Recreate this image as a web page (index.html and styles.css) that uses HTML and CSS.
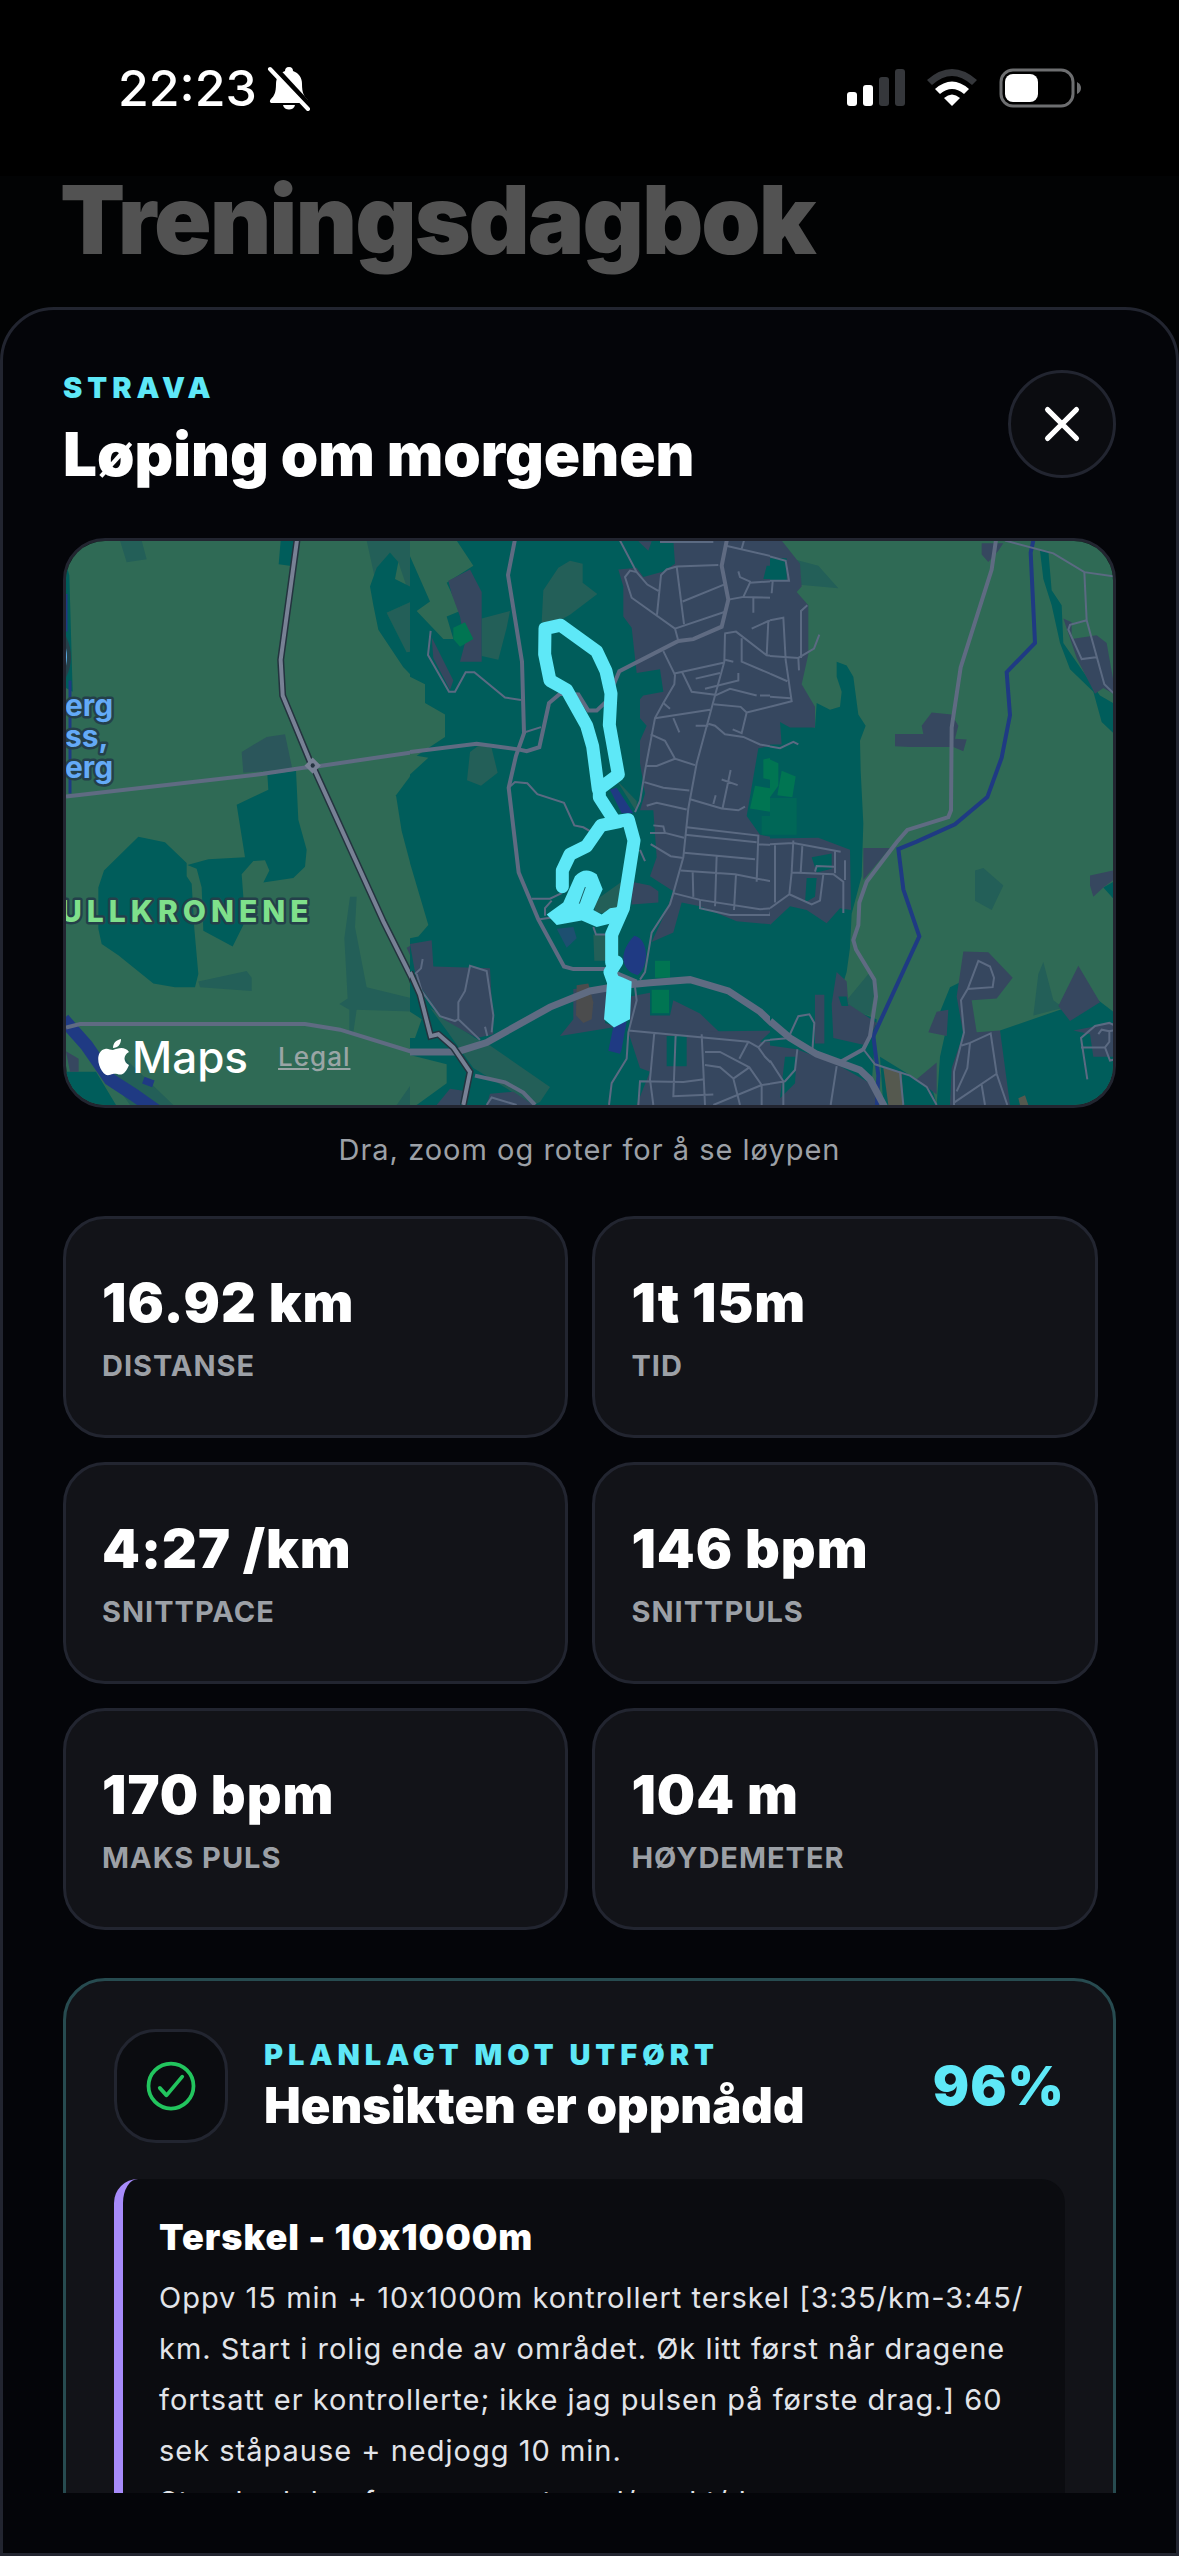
FILE: index.html
```
<!DOCTYPE html>
<html lang="no">
  <head>
    <meta charset="UTF-8" />
    <meta name="viewport" content="width=device-width, initial-scale=1.0" />
    <title>Treningsdagbok</title>
    <link rel="stylesheet" href="styles.css" />
  </head>
  <body>
    <div class="app">
      <!-- Status bar -->
      <header class="status-bar">
        <div class="status-left">
          <span class="status-time">22:23</span>
          <svg class="icon-bell" viewBox="0 0 44 46">
            <path d="M22 2c3 0 4 2 4 4 6 2 9 7 9 13 0 9 2 12 5 15 2 2 1 4-1 4H5c-2 0-3-2-1-4 3-3 5-6 5-15 0-6 3-11 9-13 0-2 1-4 4-4z" fill="#fff" />
            <path d="M16 40h12c-1 6-11 6-12 0z" fill="#fff" />
            <path d="M5 1l38 41" stroke="#000" stroke-width="7" />
            <path d="M3 4l38 40" stroke="#fff" stroke-width="4" stroke-linecap="round" />
          </svg>
        </div>
        <div class="status-right">
          <svg class="icon-signal" viewBox="0 0 58 38">
            <rect x="0" y="23" width="10" height="14" rx="3" fill="#fff" />
            <rect x="16" y="16" width="10" height="21" rx="3" fill="#fff" />
            <rect x="32" y="8" width="10" height="29" rx="3" fill="#35373b" />
            <rect x="48" y="0" width="10" height="37" rx="3" fill="#35373b" />
          </svg>
          <svg class="icon-wifi" viewBox="0 0 50 38">
            <path d="M0 11Q25-11 50 11l-5 5Q25-2 5 16z" fill="#35373b" />
            <path d="M8 20q17-15 34 0l-5 5q-12-10-24 0z" fill="#fff" />
            <path d="M17 29q8-7 16 0l-8 8z" fill="#fff" />
          </svg>
          <svg class="icon-battery" viewBox="0 0 82 40">
            <rect x="2" y="2" width="72" height="36" rx="12" fill="none" stroke="#6d6e70" stroke-width="3" />
            <rect x="6" y="6" width="33" height="28" rx="8" fill="#fff" />
            <path d="M78 14q4 2 4 6t-4 6z" fill="#6d6e70" />
          </svg>
        </div>
      </header>

      <h1 class="page-title">Treningsdagbok</h1>

      <main class="sheet">
        <div class="sheet-scroll">
          <div class="sheet-header">
            <div>
              <p class="eyebrow">STRAVA</p>
              <h2 class="sheet-title">Løping om morgenen</h2>
            </div>
            <button class="close-btn" aria-label="Lukk">
              <svg viewBox="0 0 512 512">
                <path d="M368 368L144 144M368 144L144 368" />
              </svg>
            </button>
          </div>

          <!-- Route map, drawn as three tiles -->
          <div class="map">
            <svg class="map-canvas" viewBox="0 0 1047 564" preserveAspectRatio="xMidYMid slice">
              <!-- west tile -->
              <svg x="-16" y="-11" width="370" height="590" viewBox="0 0 1110 1568" preserveAspectRatio="none">
                <rect class="field" width="1110" height="1568" />
                <path class="scrub" d="M210 28h65l15 50-60 8zM950 28h160v300l-40-3-60-105 75-30-40-105-25-25-40 90zM445 1200L590 1172l15 18v35l-155-10zM900 975h20l-5 80 35 160 160 35v30l-190-5-10 60h-12v-60l-30-15 25-15-10-160zM1110 1440l-70 88h70zM220 1400l150 128H240l-70-88z" />
                <g class="forest">
                  <path d="M265 815L345 830 410 885V920L425 940 433 1060 445 1180 435 1215H375L310 1205 205 1130 155 1100 145 1060V950L162 905z" />
                  <path d="M412 890L475 875 585 870 560 730 655 690 652 650 738 640 745 770 770 850 765 895 730 925 640 937 658 905 645 878 610 880 575 915 583 1010 580 1050 548 1107 460 1065 455 950 440 900z" />
                  <path d="M692 28h50l-18 68-38-5z" />
                  <path d="M1020 60L1045 85 1035 130 1080 150 1085 190 1010 220 1070 325 1110 320V410L1060 365 985 265 970 200 960 150 980 100z" />
                  <path d="M1110 640L1080 655 1038 705 1055 800 1085 900 1110 920z" />
                  <path d="M48 90L58 120 68 430 48 420zM48 1440l90 0 60 88H60z" />
                </g>
                <path d="M575 590L650 550 705 543 727 635 580 645z" fill="#2b565b" />
                <path class="town" d="M1070 1110l40-20v70h-15zM48 1385l38 20v35H60z" />
                <g class="water">
                  <path d="M40 1300L110 1370 180 1460 250 1500 330 1550" stroke-width="13" />
                  <path d="M60 400V700M48 170V270" stroke-width="3" />
                  <path d="M280 1462l30 10" stroke-width="7" />
                </g>
                <path class="road" d="M48 708L640 648 760 632 810 627 1110 588" />
                <path class="road" d="M48 1322L90 1313H765L870 1328 1080 1385H1110" />
                <path class="motorway-case" d="M742 20L692 345 698 440 780 615 795 640 1000 1040 1085 1190 1115 1265" />
                <path class="motorway" d="M742 20L692 345 698 440 780 615 795 640 1000 1040 1085 1190 1115 1265" />
                <path class="motorway" d="M772 626l16-14 16 14-16 14z" />
                <ellipse cx="788" cy="626" rx="6" ry="6" fill="#24333f" />
              </svg>

              <!-- middle tile -->
              <svg x="344" y="-11" width="370" height="590" viewBox="0 0 1110 1568" preserveAspectRatio="none">
                <rect class="woods" width="1110" height="1568" />
                <path class="field" d="M0 28H140L190 95 110 140 150 215 110 230 130 290 100 290 20 215 60 190 0 70zM0 390l45 20v50l60 30v60l-85 50 35 5-55 45zM0 885l55 165-30 30-25 5zM0 1280l35 20-20 50H0zM0 1395l110 25v50l-90 58H0z" />
                <path class="scrub" d="M400 160L445 100 480 82 518 90V140L562 170 480 225 440 245H395zM215 235L300 215 290 260 265 345 215 335zM180 590l30-20 35 10 18 65-50 35-42-15zM555 985l80-50v90l-80-10zM620 665L680 720V750zM550 1075h75v70h-72zM60 1270L195 1350 240 1370 420 1480 390 1520 370 1528 190 1430 110 1330z" />
                <g class="town">
                  <path d="M115 135L180 105 215 165V350H150L165 300 150 230 125 170zM65 285L130 400 120 425 70 340zM0 1100L65 1090 70 1160 240 1165 250 1340 200 1350 100 1300 20 1200z" />
                  <path d="M685 30h40l-10 25zM790 28L795 90 760 110 700 125 680 100 625 105 640 150V230L665 260 680 380 750 370 760 430 700 440 690 450V500L710 520 690 560V620L705 700 690 745H730L740 870 720 920 790 960 770 1010 725 1095 790 1070 815 990 870 1000 980 1040 1110 1050V820L1050 810 1010 760 1045 580 1110 570V28z" />
                  <path d="M665 935L720 945 745 960V990L665 995zM490 1220L590 1215 585 1310 620 1320 450 1345 490 1300zM660 1240L720 1230V1290H780L790 1250 870 1285 940 1345 660 1340z" />
                  <path d="M655 1335L1110 1330V1528H680L720 1440 690 1430zM80 1528L120 1485 160 1490 150 1528zM230 1528l10-30 70-5 60 35z" />
                </g>
                <path class="forest" d="M770 1345h60v80h-60zM1050 1360l60-50v50zM1060 130l10-35h40v35z" />
                <path class="pitch" d="M130 260L165 245 190 290 150 310 130 290zM1060 610l50-10v70l-50-10zM1035 680l75 10-20 60-70-10zM735 1145h45v45h-45zM725 1222h52v62h-52z" />
                <path d="M1055 760h55v50h-55z" fill="#006757" />
                <path d="M440 1060l50-5 10 30-30 25z" fill="#1d4f70" />
                <path d="M500 1210l35-5 15 50-5 45-25 10-22-20z" fill="#4b4c4d" />
                <path class="lake" d="M600 690l20-5 50 68h-35zM673 1078c45 10 45 80 10 105-50-10-60-60-10-105zM610 1320l40-15-15 75-5 12-35-8z" />
                <g class="street">
                  <path d="M62 268L54 332 117 430H135L167 378H193L285 445 333 452M342 538L393 524M296 685L315 670 352 673 382 702 462 725 493 785 520 790 540 800" />
                  <path d="M630 28L680 112 712 145 745 162M680 112L660 108 645 125 665 180 795 262 805 295M741 225L753 120 770 105 800 97 925 93M800 97L822 250M818 190L942 145M795 262L943 218M750 32H910" />
                  <path d="M760 322L795 385 793 410 760 460 735 500 705 640 690 720 675 750M735 500L900 478M790 382L940 353M945 275L943 350 915 440 860 620 835 740 820 870 790 965 780 995 725 1070 705 1175 690 1195M815 375L845 430 915 438" />
                  <path d="M955 185L1000 178 1020 140 1110 135M1000 178L1085 180 1090 140M1030 180V220M985 110L990 125 1022 138M943 275L978 270 1070 333 1110 337M1025 262L1075 242 1110 237M1075 242L1070 333M995 288V350L1110 393M948 42L1110 75M995 50L1002 28M857 395L930 380M885 422L985 400V380M915 440L960 422 1040 440M1050 440H1110M945 345L970 350" />
                  <path d="M910 463L992 470 1010 485 995 540 968 530M1010 485L1110 463M895 515L915 520 945 543 1000 550 1050 570 1110 580M895 520H857M790 500L808 538M722 543L765 560 795 608 855 625M705 627H740L795 608M703 670L760 685 838 692M838 715L935 740 985 745 1005 735M710 733L740 725 830 743M935 663L983 678M962 638L938 738M910 728L917 705M760 460L780 475" />
                  <path d="M830 790L1045 812 1040 935M825 810L1040 830M720 805H765L760 788 730 785M765 805L822 818M722 835L782 867 820 872M822 858L1035 875M812 905L975 915 1090 935M848 908L850 975M920 865L915 1000M978 915L972 1010M1045 835L1110 838M1095 838L1090 1000M790 965L870 983 1050 1008 1085 1005 1110 995M870 983V1005L960 1023H1080L1085 1005" />
                  <path d="M655 1330L1015 1360 1045 1375 1065 1400 1110 1440M1045 1375L1065 1357 1110 1353M733 1335L720 1460 730 1528M797 1340L790 1505 910 1500M875 1340L885 1528M885 1387H930L1018 1428 1055 1475V1528M885 1422L930 1428 970 1458 990 1528M970 1458L1018 1428M1015 1360L988 1405M685 1528L690 1465 820 1467 883 1460M1055 1475L1110 1468M910 1528L1055 1475" />
                  <path d="M675 1215L680 1250 655 1335 650 1405 605 1470 597 1528M20 1180L35 1225 90 1292 135 1305 145 1300V1255L165 1225 180 1158 230 1172 250 1290 245 1335M145 1300L210 1355M232 1345L225 1320M38 1140L33 1165 15 1180M230 1528L245 1508 320 1528M365 980H420L455 965M385 1035L425 1030M405 1025V1005L425 985M550 1055L558 1075H590M690 850L705 880" />
                </g>
                <g class="road">
                  <path d="M316 20L294 120 336 350 342 540 318 600 296 685 326 910 385 1035 462 1160 490 1167H590L680 1200" />
                  <path d="M0 590L200 568 325 583 350 588 388 577 417 460 450 435 505 437 535 480 560 480 590 455 628 375 805 295 850 290 935 257 955 185 935 95 952 20" />
                  <path d="M195 1450L285 1468 340 1495 375 1528" />
                </g>
                <path class="highway" d="M0 1387H140L230 1362 420 1268 540 1225 640 1210 720 1203 840 1195 955 1225 1050 1280 1115 1335" />
                <path class="motorway-case" d="M0 1175L30 1235 62 1345 85 1340 130 1375 180 1440 160 1528" />
                <path class="motorway" d="M0 1175L30 1235 62 1345 85 1340 130 1375 180 1440 160 1528" />

                <!-- GPS track -->
                <g class="track">
                  <path d="M565 690L548 575 530 520 470 425 420 400 404 330 405 262 452 253 560 322 588 375 603 435 598 518 625 650 568 688 568 710 615 775 655 770 672 825 640 1005 605 1075V1150L620 1148 600 1175 610 1200" />
                  <path d="M628 775L573 785 530 840 480 862 457 905V948" />
                </g>
                <path class="track-fill" d="M410 1022L460 990 495 920Q525 892 560 915L578 955 550 1010 575 1022 600 1005 640 1000 605 1045 560 1055 515 1038 440 1050zM583 1170L640 1190 665 1200 660 1300 612 1322 582 1300 592 1195z" />
                <path d="M508 993l18-44" fill="none" stroke="#1d6167" stroke-width="1" />
              </svg>

              <!-- east tile -->
              <svg x="704" y="-11" width="370" height="590" viewBox="0 0 1110 1568" preserveAspectRatio="none">
                <rect class="field" width="1110" height="1568" />
                <path class="scrub" d="M80 80L145 95 205 155 80 145zM615 905L640 898 700 945 665 1010 615 985zM820 1148L850 1250 880 1270 790 1290 805 1180zM295 1180L320 1200 300 1290 250 1280 230 1250z" />
                <g class="forest">
                  <path d="M200 350L230 360 250 390 265 490 287 520 270 560 272 640 280 780 275 920 245 1020 240 1110 230 1175 200 1260 320 1300 300 1528H0V480L35 510 135 525 140 460 180 478 210 470 215 430 200 390z" />
                  <path d="M810 55h25L845 160 875 200 880 300 950 390 990 440 1030 460V540L995 510 970 430 900 370 870 300 845 200 820 130z" />
                  <path d="M540 1215L575 1200 590 1340 550 1430 540 1528H500L510 1400 530 1320 510 1280zM690 1330L870 1275 985 1250 1030 1280V1528H700zM1000 950l30-15v45zM330 1400L440 1460H480L500 1528H340z" />
                </g>
                <g class="town">
                  <path d="M0 28H35L90 90 95 150 80 165 115 200V330L95 410 135 470V525H60L30 510 35 570H0zM0 820L145 818 240 850 243 1010 210 1005 170 1045 110 1010 60 1000 0 1050zM280 845H360L280 930z" />
                  <path d="M375 542H460L455 520 485 485 545 490 565 520 555 555 590 557 580 588 550 577H420L375 575zM635 35h65l-15 20-30 30-20-20zM880 235L905 245V290L980 280 1010 300 1030 400V435L1000 420 975 435 920 340zM960 918L1030 905V930L1000 950 970 975 960 945z" />
                  <path d="M580 1120L655 1122 728 1190 680 1245 605 1250 620 1335 690 1330 720 1528H540L545 1430 580 1340 560 1240zM500 1280L535 1275 530 1345 475 1335zM925 1158L990 1255 900 1305 865 1265z" />
                  <path d="M200 1175L230 1200 235 1260 320 1310 290 1370 190 1350 185 1260zM135 1235h28v130h-28zM0 1370L80 1380 200 1420 300 1470 330 1528H0zM910 1330L1030 1310V1400H970L960 1340zM440 1460l60-45v85z" />
                </g>
                <path class="forest" d="M0 75h50v60H0zM125 870l60-10v40l-45 10zM110 925h30l-5 50-30 15zM205 1240h25l5 25h-20zM45 1400h35l-5 70-45 40z" />
                <path class="pitch" d="M0 610l25 10v60L0 710zM35 640l42 15-10 55-45-5z" />
                <path d="M0 712h80v98H0z" fill="#006757" />
                <path d="M340 1430l55 10 5 88h-45zM745 1510l20-8 10 26h-25z" fill="#55594f" />
                <g class="water">
                  <path d="M792 20L782 60 795 300 710 378 720 492 695 605 652 710 555 782 440 828 385 848 400 955 448 1080 310 1345 325 1450 320 1540" stroke-width="4" />
                </g>
                <g class="street">
                  <path d="M280 1380L315 1420 420 1450 470 1480 500 1528M390 1440L400 1528M705 28L850 62 943 112 1030 123M943 112L950 240 1003 410 1030 433M950 240L900 252 895 265 935 343 978 338" />
                  <path d="M0 70L47 82 57 135H0M8 137L5 168M0 240L40 233 47 345 65 455 0 470M0 335L85 340 132 315 148 278M93 340V215L112 200M85 340L87 373M0 382L52 402M0 443L62 447M0 575L30 580 70 563 85 570" />
                  <path d="M0 835L70 832 212 855M70 825L65 910 58 968 0 1005M15 838V990M97 840L92 910M65 910L190 915 220 935V1018M225 878V930M195 855V912M135 908L140 893 192 895M160 915L150 985 125 995 58 968" />
                  <path d="M60 1340L85 1292 118 1287 133 1310 127 1385M82 1380L75 1435 45 1465 0 1472M0 1410L40 1465V1528M200 1425L182 1528M0 1355L60 1350" />
                  <path d="M593 1220L625 1145 660 1160 672 1190 668 1215 593 1220 573 1250 582 1335 552 1440V1528M575 1370L600 1363 662 1338 680 1445 712 1528M600 1363L592 1430 560 1492M552 1522L680 1445M635 1475L645 1528" />
                  <path d="M952 1460L933 1350 975 1318 1018 1310 1030 1315M933 1375H1005L1020 1410 1030 1408M1005 1375L1018 1360V1332L1030 1330M985 1340L995 1328 1018 1332" />
                </g>
                <path class="road" d="M679 20L665 105 572 365 545 525 543 745 535 763 412 797 380 830 290 935 268 990 265 1050 250 1090 258 1115 313 1195 318 1240 300 1345 280 1380 215 1412" />
                <path class="highway" d="M0 1305L60 1350 140 1393 270 1435 300 1460 345 1535" />
              </svg>

              <!-- place labels -->
              <g class="map-label map-label-blue">
                <text x="-1" y="175">erg</text>
                <text x="-1" y="206">ss,</text>
                <text x="-1" y="237">erg</text>
              </g>
              <text class="map-label map-label-green" x="-6" y="381">ULLKRONENE</text>
              <path d="M-2 96q10 20 0 40z" fill="#5dade8" stroke="#24404a" stroke-width="4" />
            </svg>
            <div class="map-attribution">
              <span class="apple-maps">
                <svg class="icon-apple" viewBox="0 0 31 37">
                  <path d="M15 11c-3 0-5-2-8-1-9 2-8 15-3 22 4 6 7 4 11 3 4-1 8 3 12-2 2-2 3-5 4-7-6-3-6-10 0-13-4-6-11-4-16-2z" fill="#fff" />
                  <path d="M15 9c0-5 3-8 8-9 0 5-3 9-8 9z" fill="#fff" />
                </svg>
                <span>Maps</span>
              </span>
              <a class="legal" href="#">Legal</a>
            </div>
          </div>
          <p class="map-hint">Dra, zoom og roter for å se løypen</p>

          <!-- Stats -->
          <dl class="stats">
            <div class="stat"><dd>16.92 km</dd><dt>DISTANSE</dt></div>
            <div class="stat"><dd>1t 15m</dd><dt>TID</dt></div>
            <div class="stat"><dd>4:27 /km</dd><dt>SNITTPACE</dt></div>
            <div class="stat"><dd>146 bpm</dd><dt>SNITTPULS</dt></div>
            <div class="stat"><dd>170 bpm</dd><dt>MAKS PULS</dt></div>
            <div class="stat"><dd>104 m</dd><dt>HØYDEMETER</dt></div>
          </dl>

          <!-- Planned vs completed -->
          <section class="review">
            <div class="review-header">
              <div class="review-icon">
                <svg viewBox="0 0 512 512">
                  <circle cx="256" cy="256" r="192" />
                  <path d="M352 176L217.6 336 160 272" />
                </svg>
              </div>
              <div class="review-heading">
                <p class="eyebrow">PLANLAGT MOT UTFØRT</p>
                <h3>Hensikten er oppnådd</h3>
              </div>
              <strong class="score">96%</strong>
            </div>
            <div class="plan">
              <h4>Terskel - 10x1000m</h4>
              <p>Oppv 15 min + 10x1000m kontrollert terskel [3:35/km-3:45/<wbr />km. Start i rolig ende av området. Øk litt først når dragene fortsatt er kontrollerte; ikke jag pulsen på første drag.] 60 sek ståpause + nedjogg 10 min.</p>
              <p>Standard dag for grense ut med/ makt/d</p>
            </div>
          </section>
        </div>
      </main>
    </div>
  </body>
</html>
```
FILE: styles.css
```
* {
  box-sizing: border-box;
}

body {
  margin: 0;
  background: #000;
  color: #fff;
  font-family: Inter, "Liberation Sans", sans-serif;
}

h1,
h2,
h3,
h4,
p,
dl,
dd {
  margin: 0;
}

svg {
  display: block;
}

.app {
  height: 100vh;
  display: flex;
  flex-direction: column;
  background: #020304;
}

/* Status bar */
.status-bar {
  flex: none;
  height: 176px;
  padding: 0 98px 0 118px;
  display: flex;
  align-items: center;
  justify-content: space-between;
  background: #000;
}

.status-left,
.status-right {
  display: flex;
  align-items: center;
}

.status-left {
  gap: 10px;
}

.status-right {
  gap: 22px;
}

.status-time {
  font-size: 50px;
  line-height: 60px;
  font-weight: 500;
}

.icon-bell {
  width: 44px;
  height: 46px;
}

.icon-signal {
  width: 58px;
  height: 38px;
}

.icon-wifi {
  width: 50px;
  height: 38px;
}

.icon-battery {
  width: 82px;
  height: 40px;
}

.page-title {
  flex: none;
  padding: 0 60px;
  height: 131px;
  font-size: 95px;
  line-height: 88px;
  font-weight: 900;
  letter-spacing: -2px;
  color: #525252;
}

/* Bottom sheet */
.sheet {
  flex: 1;
  min-height: 0;
  padding: 60px;
  display: flex;
  flex-direction: column;
  background: #040509;
  border: 3px solid #222530;
  border-radius: 54px 54px 0 0;
}

.sheet-scroll {
  flex: 1;
  min-height: 0;
  overflow: hidden;
}

.sheet-header {
  display: flex;
  justify-content: space-between;
  align-items: flex-start;
  margin-bottom: 48px;
}

.eyebrow {
  font-size: 29px;
  line-height: 36px;
  font-weight: 900;
  letter-spacing: 5px;
  color: #5ee8f7;
}

.sheet-title {
  margin-top: 12px;
  font-size: 60px;
  line-height: 72px;
  font-weight: 900;
}

.close-btn {
  width: 108px;
  height: 108px;
  padding: 0;
  display: flex;
  align-items: center;
  justify-content: center;
  background: #0b0c10;
  border: 3px solid #222530;
  border-radius: 50%;
}

.close-btn svg {
  width: 66px;
  height: 66px;
  fill: none;
  stroke: #fff;
  stroke-width: 40;
  stroke-linecap: round;
}

/* Map */
.map {
  position: relative;
  height: 570px;
  overflow: hidden;
  border: 3px solid #222530;
  border-radius: 42px;
}

.map-canvas {
  width: 100%;
  height: 100%;
}

.field {
  fill: #2f6a55;
}

.forest,
.woods {
  fill: #005d5b;
}

.scrub {
  fill: #235f58;
}

.town {
  fill: #36475f;
}

.pitch {
  fill: #007552;
}

.lake {
  fill: #1f3a83;
}

.map-canvas path {
  vector-effect: non-scaling-stroke;
}

.water {
  fill: none;
  stroke: #1f3a83;
}

.street {
  fill: none;
  stroke: #5b6a82;
  stroke-width: 2px;
}

.road {
  fill: none;
  stroke: #5f6b82;
  stroke-width: 4px;
}

.highway {
  fill: none;
  stroke: #5f6b82;
  stroke-width: 7px;
}

.motorway-case {
  fill: none;
  stroke: #24333f;
  stroke-width: 7px;
}

.motorway {
  fill: none;
  stroke: #788195;
  stroke-width: 4px;
}

.track {
  fill: none;
  stroke: #5ee8f7;
  stroke-width: 13px;
  stroke-linecap: round;
  stroke-linejoin: round;
}

.track-fill {
  fill: #5ee8f7;
}

.map-label {
  font-weight: 700;
  font-size: 30px;
  stroke: #24404a;
  stroke-width: 5px;
  stroke-linejoin: round;
  paint-order: stroke;
}

.map-label-blue {
  fill: #64aaf7;
}

.map-label-green {
  fill: #7fe08b;
  font-weight: 800;
  letter-spacing: 5px;
}

.map-attribution {
  position: absolute;
  left: 32px;
  bottom: 18px;
  display: flex;
  align-items: center;
  gap: 30px;
}

.apple-maps {
  display: flex;
  align-items: center;
  gap: 3px;
  font-size: 44px;
  line-height: 60px;
  font-weight: 500;
}

.icon-apple {
  width: 31px;
  height: 37px;
}

.legal {
  font-size: 26px;
  line-height: 36px;
  font-weight: 500;
  letter-spacing: 1px;
  color: #9aa5a5;
}

.map-hint {
  margin-top: 24px;
  font-size: 29px;
  line-height: 36px;
  letter-spacing: 1px;
  text-align: center;
  color: #9ca0a6;
}

/* Stats */
.stats {
  display: flex;
  flex-wrap: wrap;
  gap: 24px;
  margin-top: 48px;
}

.stat {
  width: 48%;
  height: 222px;
  padding: 51px 36px 0;
  background: #121318;
  border: 3px solid #222530;
  border-radius: 42px;
}

.stat dd {
  font-size: 54px;
  line-height: 66px;
  font-weight: 900;
  letter-spacing: 1px;
}

.stat dt {
  margin-top: 12px;
  font-size: 29px;
  line-height: 36px;
  font-weight: 700;
  letter-spacing: 1px;
  color: #9ca0a6;
}

/* Planned vs completed */
.review {
  margin-top: 48px;
  padding: 48px;
  background: #121318;
  border: 3px solid #274b50;
  border-radius: 42px;
}

.review-header {
  display: flex;
  align-items: center;
  gap: 36px;
  margin-bottom: 36px;
}

.review-icon {
  width: 114px;
  height: 114px;
  display: flex;
  align-items: center;
  justify-content: center;
  background: #0b0c10;
  border: 3px solid #222530;
  border-radius: 42px;
}

.review-icon svg {
  width: 60px;
  height: 60px;
  fill: none;
  stroke: #22c55e;
  stroke-width: 32;
  stroke-linecap: round;
  stroke-linejoin: round;
}

.review-heading {
  flex: 1;
}

.review-heading h3 {
  margin-top: 3px;
  font-size: 49px;
  line-height: 60px;
  font-weight: 900;
}

.score {
  font-size: 54px;
  line-height: 66px;
  font-weight: 900;
  letter-spacing: 1px;
  color: #5ee8f7;
}

.plan {
  padding: 36px;
  background: #0b0c10;
  border-left: 9px solid #a78bfa;
  border-radius: 24px;
  font-variant-ligatures: no-contextual; /* keep the x in 10x1000m */
}

.plan h4 {
  margin-bottom: 12px;
  font-size: 36px;
  line-height: 45px;
  font-weight: 900;
  letter-spacing: 1px;
}

.plan p {
  font-size: 29px;
  line-height: 51px;
  letter-spacing: 1px;
  color: #e2e4e9;
}
```
